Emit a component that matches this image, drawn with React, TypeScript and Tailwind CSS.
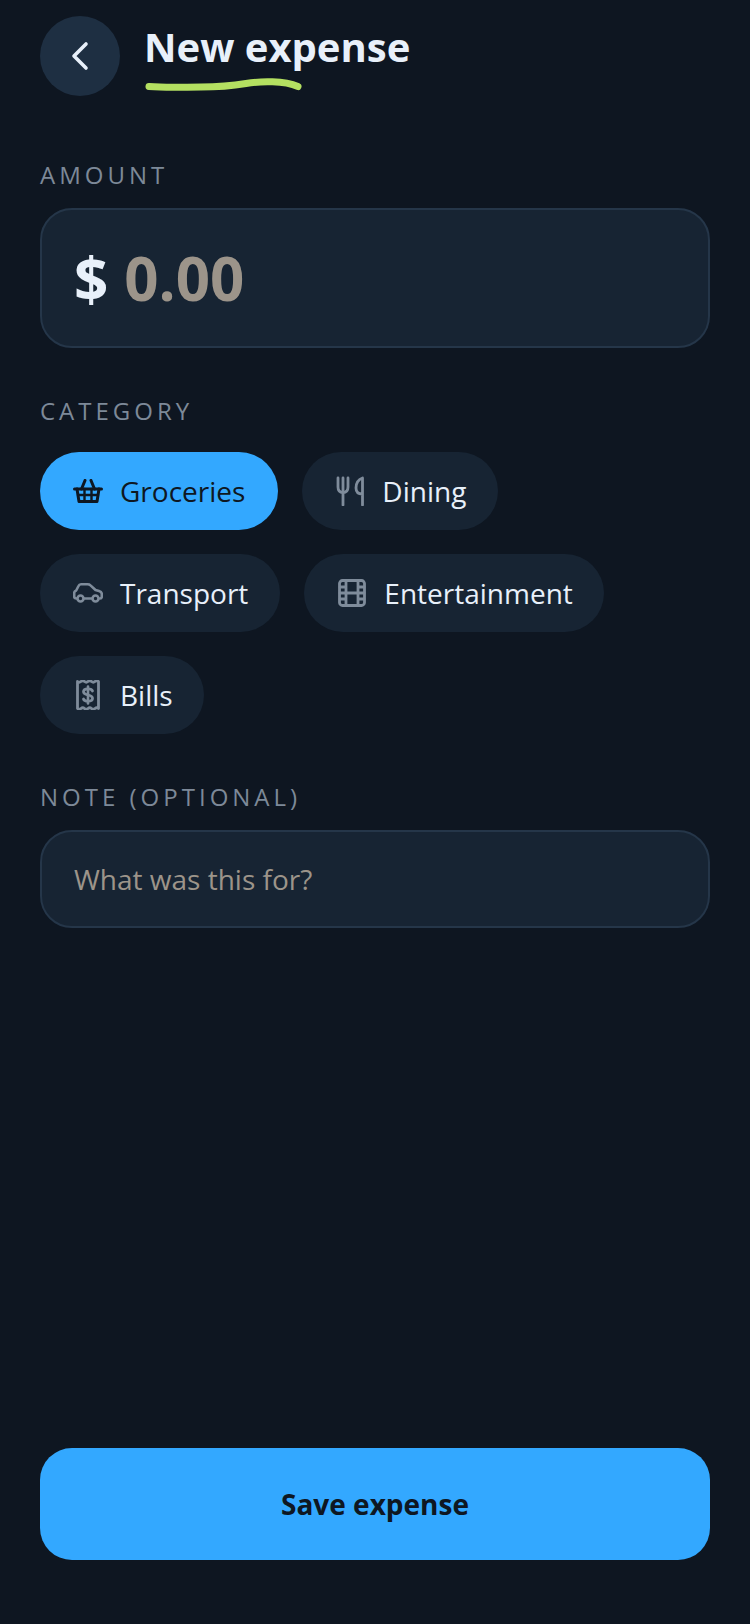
import { ChevronLeft } from "lucide-react";
import type { ReactNode } from "react";

function Basket() {
  return (
    <svg viewBox="0 0 30 24" className="w-[30px] h-[24px]" fill="none" stroke="currentColor" strokeWidth="3" strokeLinecap="round" strokeLinejoin="round">
      <path d="M1.500 10h27" />
      <path d="M4 10l2 12.500h18L26 10" />
      <path d="M8.500 10l3.500-8.500M21.500 10L18 1.500" />
      <path d="M5 16h20M11.500 10v12M18.500 10v12" strokeWidth="2.400" />
    </svg>
  );
}

function Fork() {
  return (
    <svg viewBox="0 0 30 30" className="w-[30px] h-[30px]" fill="none" stroke="currentColor" strokeWidth="2.800" strokeLinecap="round" strokeLinejoin="round">
      <path d="M3 2v9c0 3.500 2 5.500 5 5.500s5-2 5-5.500V2" />
      <path d="M8 2v27" />
      <path d="M27.500 29V2c-4 1.500-6.500 5-6.500 10 0 4 2.500 6 6.500 6" />
    </svg>
  );
}

function Car() {
  return (
    <svg viewBox="0 0 30 20" className="w-[30px] h-[20px]" fill="none" stroke="currentColor" strokeWidth="2.600" strokeLinecap="round" strokeLinejoin="round">
      <path d="M3.500 15.500c-1.500 0-2.300-.7-2.300-2v-3.500c0-1.200.8-2 2-2.500L5.500 3C6 1.800 7 1.300 8 1.300h6.500c1.300 0 2.300.4 3 1.100L22.500 7l3.500 1c1.800.5 2.800 1.500 2.800 3v2.500c0 1.300-.6 2-1.800 2" />
      <path d="M11 15.500h8" />
      <circle cx="7.500" cy="15.500" r="3" />
      <circle cx="22.500" cy="15.500" r="3" />
    </svg>
  );
}

function FilmIcon() {
  return (
    <svg viewBox="0 0 28 28" className="w-[28px] h-[28px]" fill="none" stroke="currentColor" strokeWidth="2.800" strokeLinecap="round" strokeLinejoin="round">
      <rect x="1.500" y="1.500" width="25" height="25" rx="3" />
      <path d="M8 2v24M20 2v24M8 14h12M2 8h6M2 14h6M2 20h6M20 8h6M20 14h6M20 20h6" />
    </svg>
  );
}

function Receipt() {
  return (
    <svg viewBox="0 0 24 30" className="w-[24px] h-[30px]" fill="none" stroke="currentColor" strokeWidth="2.800" strokeLinecap="round" strokeLinejoin="round">
      <path d="M1.500 1.500q1.750 1.500 3.500 0t3.500 0 3.500 0 3.500 0 3.500 0 3.500 0v27q-1.750-1.500-3.500 0t-3.500 0-3.500 0-3.500 0-3.500 0-3.500 0z" />
      <path d="M16.500 11c-.5-1.500-2.500-2.200-4.500-2.200-2.500 0-4.500 1-4.500 3 0 4.400 9 2 9 6.400 0 2-2 3-4.500 3-2 0-4-.7-4.500-2.200" strokeWidth="2.800" />
      <path d="M12 6.500v17" strokeWidth="2.600" />
    </svg>
  );
}

function Chip({ icon, label, active, pad }: { icon: ReactNode; label: string; active?: boolean; pad: string }) {
  return (
    <div
      className={`flex items-center gap-4 h-[78px] pl-8 ${pad} rounded-full text-[28px] ${
        active ? "bg-[#33a8ff] text-[#0e1722]" : "bg-[#172433] text-[#e8f0fa]"
      }`}
    >
      <span className={`w-[32px] flex justify-center ${active ? "text-[#0e1722]" : "text-[#7f8c9b]"}`}>{icon}</span>
      {label}
    </div>
  );
}

function Label({ children }: { children: ReactNode }) {
  return <div className="text-[24px] leading-[32px] tracking-[4px] text-[#7d8998] uppercase">{children}</div>;
}

export default function App() {
  return (
    <div className="w-[750px] h-[1624px] bg-[#0e1621] flex flex-col px-10 pt-4 pb-16 font-['Open_Sans',sans-serif]">
      <div className="flex items-start gap-6">
        <button className="w-20 h-20 rounded-full bg-[#1e2f42] flex items-center justify-center text-[#e8f0fa]">
          <ChevronLeft size={48} strokeWidth={1.8} />
        </button>
        <div className="relative">
          <h1 className="text-[40px] leading-[54px] font-bold text-[#e8f0fa] mt-[4px]">New expense</h1>
          <svg viewBox="0 0 160 16" className="absolute left-0 top-[60px] w-[160px] h-[16px]" fill="none">
            <path d="M5 10.500c18 1.500 36 .5 52 .5s30-1 45-3.500c15-2.500 38-3 52 3" stroke="#b4e061" strokeWidth="7" strokeLinecap="round" />
          </svg>
        </div>
      </div>

      <div className="mt-[63px]">
        <Label>AMOUNT</Label>
      </div>
      <div className="mt-[17px] h-[140px] rounded-[32px] border-2 border-[#253649] bg-[#172433] flex items-center px-8 text-[60px] font-bold gap-4">
        <span className="text-[#e8f0fa]">$</span>
        <span className="text-[#9c948a]">0.00</span>
      </div>

      <div className="mt-[47px]">
        <Label>CATEGORY</Label>
      </div>
      <div className="mt-[25px] flex flex-wrap gap-6">
        <Chip active icon={<Basket />} label="Groceries" pad="pr-[33px]" />
        <Chip icon={<Fork />} label="Dining" pad="pr-8" />
        <Chip icon={<Car />} label="Transport" pad="pr-8" />
        <Chip icon={<FilmIcon />} label="Entertainment" pad="pr-[31px]" />
        <Chip icon={<Receipt />} label="Bills" pad="pr-[31px]" />
      </div>

      <div className="mt-[47px]">
        <Label>NOTE (OPTIONAL)</Label>
      </div>
      <div className="mt-[17px] h-[98px] rounded-[32px] border-2 border-[#253649] bg-[#172433] flex items-center px-8 text-[28px] text-[#9c948a]">
        What was this for?
      </div>

      <button className="mt-auto h-[112px] rounded-[32px] bg-[#33a8ff] text-[#0e1722] text-[28px] font-bold">Save expense</button>
    </div>
  );
}
